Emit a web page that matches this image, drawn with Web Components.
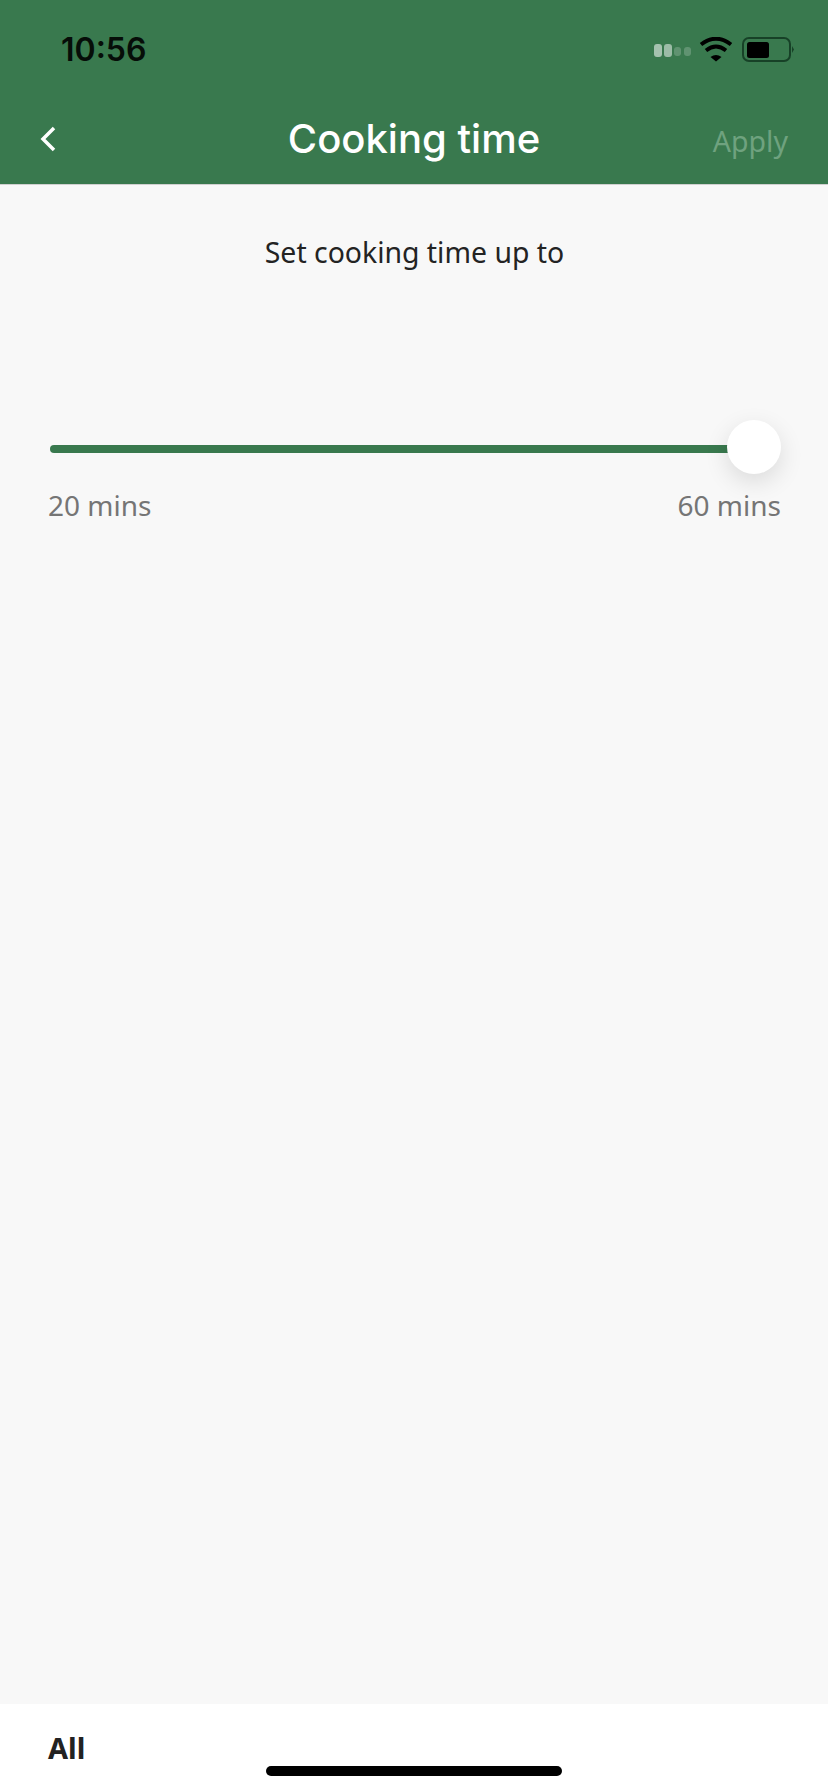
<!DOCTYPE html>
<html>
<head>
<meta charset="utf-8">
<style>
  html, body { margin: 0; height: 100%; }
  body { background: #f8f8f8; overflow: hidden; }
  cooking-screen { height: 1792px; }
</style>
</head>
<body>
<cooking-screen>
  <nav-header title="Cooking time" action="Apply"></nav-header>
  <time-slider prompt="Set cooking time up to" min-label="20 mins" max-label="60 mins"></time-slider>
  <bottom-bar>All</bottom-bar>
</cooking-screen>
<script>
class CookingScreen extends HTMLElement {
  constructor() {
    super();
    this.attachShadow({ mode: 'open' }).innerHTML = `
      <style>
        :host { display: flex; flex-direction: column; width: 828px; background: #f8f8f8; }
        ::slotted(time-slider) { flex: 1; }
      </style>
      <slot></slot>
    `;
  }
}

class StatusBar extends HTMLElement {
  constructor() {
    super();
    this.attachShadow({ mode: 'open' }).innerHTML = `
      <style>
        :host { display: flex; align-items: center; height: 50px; padding: 25px 34px 25px 61px; }
        .time { font: 600 32px/50px Inter, "Liberation Sans", sans-serif; color: #060d08; flex: 1; }
        svg { display: block; }
      </style>
      <span class="time">10:56</span>
      <svg width="141" height="26" viewBox="0 0 141 26">
        <g fill="#fff">
          <rect x="1" y="7" width="8" height="13" rx="3" opacity=".55"/>
          <rect x="11" y="7" width="8" height="13" rx="3" opacity=".5"/>
          <rect x="21" y="10" width="7" height="9" rx="3" opacity=".2"/>
          <rect x="31" y="10" width="7" height="9" rx="3" opacity=".2"/>
        </g>
        <path d="M48 7.500 Q63 -4 78 7.500" fill="none" stroke="#000" stroke-width="4"/>
        <path d="M53 13.500 Q63 5.500 73 13.500" fill="none" stroke="#000" stroke-width="3.800"/>
        <path d="M57.500 20 L63 24.500 L68.500 20 Q63 16 57.500 20Z" fill="#000"/>
        <rect x="90" y="1" width="47" height="23" rx="6" fill="none" stroke="#174127" stroke-width="2"/>
        <rect x="94" y="5" width="22" height="16" rx="2.500" fill="#000"/>
        <path d="M139 9 L141 12.500 L139 16Z" fill="#174127"/>
      </svg>
    `;
  }
}

class NavHeader extends HTMLElement {
  constructor() {
    super();
    const title = this.getAttribute('title');
    const action = this.getAttribute('action');
    this.attachShadow({ mode: 'open' }).innerHTML = `
      <style>
        :host { display: block; background: #39794e; height: 184px; border-bottom: 1px solid #d0d0d0; }
        .row { display: grid; grid-template-columns: 1fr auto 1fr; align-items: center; padding: 15px 40px 0 40px; height: 48px; }
        h1 { margin: 0; font: 500 40px/48px Inter, "Liberation Sans", sans-serif; color: #fff; }
        .back { display: block; width: 16px; height: 26px; }
        .apply { justify-self: end; font: 400 28.500px/48px "Noto Sans", sans-serif; color: #6fa27f; position: relative; top: 2px; }
      </style>
      <status-bar></status-bar>
      <div class="row">
        <svg class="back" viewBox="0 0 16 26"><path d="M14 2 L3 13 L14 24" fill="none" stroke="#fff" stroke-width="3.500"/></svg>
        <h1>${title}</h1>
        <span class="apply">${action}</span>
      </div>
    `;
  }
}

class TimeSlider extends HTMLElement {
  constructor() {
    super();
    this.attachShadow({ mode: 'open' }).innerHTML = `
      <style>
        :host { display: block; font-family: "Noto Sans", sans-serif; padding: 47px 47px 0 48px; }
        .prompt { margin: 0; text-align: center; font-size: 28.400px; line-height: 40px; color: #232323; }
        .track { position: relative; height: 8px; margin: 173px 27px 0 2px; background: #39794e; border-radius: 4px 0 0 4px; }
        .thumb { position: absolute; right: -27px; top: -25px; width: 54px; height: 54px; border-radius: 50%; background: #fff; box-shadow: 0 8px 24px rgba(0,0,0,.12); }
        .labels { display: flex; justify-content: space-between; margin-top: 32px; font-size: 28px; line-height: 40px; color: #757575; }
      </style>
      <p class="prompt">${this.getAttribute('prompt')}</p>
      <div class="track"><div class="thumb"></div></div>
      <div class="labels"><span>${this.getAttribute('min-label')}</span><span>${this.getAttribute('max-label')}</span></div>
    `;
  }
}

class BottomBar extends HTMLElement {
  constructor() {
    super();
    this.attachShadow({ mode: 'open' }).innerHTML = `
      <style>
        :host { display: block; position: relative; height: 88px; background: #fff; padding: 24px 48px 0; box-sizing: border-box; font: 700 29px/40px "Noto Sans", sans-serif; color: #222; }
        .home { position: absolute; left: 266px; bottom: 16px; width: 296px; height: 10px; border-radius: 5px; background: #000; }
      </style>
      <slot></slot>
      <div class="home"></div>
    `;
  }
}

customElements.define('cooking-screen', CookingScreen);
customElements.define('status-bar', StatusBar);
customElements.define('nav-header', NavHeader);
customElements.define('time-slider', TimeSlider);
customElements.define('bottom-bar', BottomBar);
</script>
</body>
</html>
